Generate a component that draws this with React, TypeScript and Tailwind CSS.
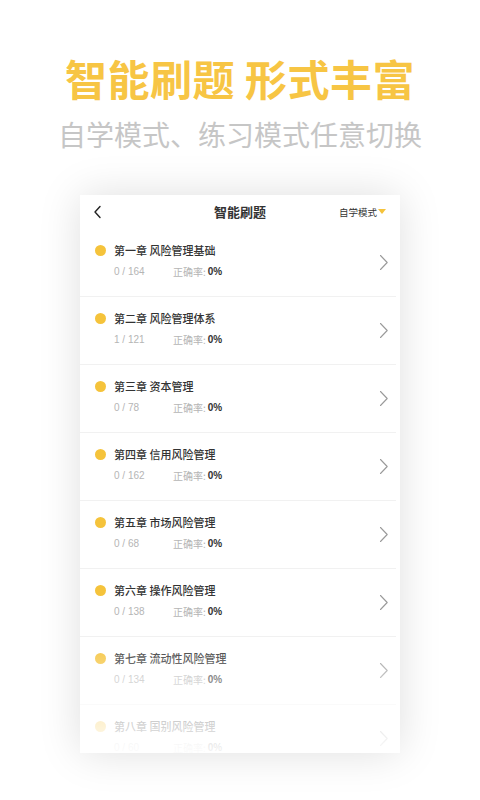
import React from "react";

const chapters = [
  { name: "第一章 风险管理基础", done: 0, total: 164 },
  { name: "第二章 风险管理体系", done: 1, total: 121 },
  { name: "第三章 资本管理", done: 0, total: 78 },
  { name: "第四章 信用风险管理", done: 0, total: 162 },
  { name: "第五章 市场风险管理", done: 0, total: 68 },
  { name: "第六章 操作风险管理", done: 0, total: 138 },
  { name: "第七章 流动性风险管理", done: 0, total: 134 },
  { name: "第八章 国别风险管理", done: 0, total: 60 },
];

function Chevron() {
  return (
    <svg width="10" height="17" viewBox="0 0 10 17" fill="none">
      <path d="M1.5 1.5 L8.2 8.5 L1.5 15.5" stroke="#9a9a9a" strokeWidth="1.1" strokeLinecap="round" strokeLinejoin="round" />
    </svg>
  );
}

export default function App() {
  return (
    <div
      className="w-[480px] h-[800px] bg-white overflow-hidden flex flex-col items-center"
      style={{ fontFamily: '"Noto Sans CJK SC", "Noto Sans", "Liberation Sans", sans-serif' }}
    >
      <div className="mt-[52px] h-[52px] flex items-center text-[42px] leading-none font-bold text-[#f7c544] tracking-[0.5px]">
        智能刷题&nbsp;形式丰富
      </div>
      <div className="mt-[12px] h-[36px] flex items-center text-[28px] leading-none font-normal text-[#c6c6c6]">
        自学模式、练习模式任意切换
      </div>

      <div className="relative mt-[43px] w-[320px] h-[558px] bg-white shadow-[0_0_40px_rgba(0,0,0,0.13)] overflow-hidden flex flex-col">
        <div className="h-[34px] shrink-0 flex items-center justify-between pl-[13px] pr-[14px] relative">
          <svg width="10" height="14" viewBox="0 0 10 14" fill="none">
            <path d="M7 1.5 L2 7 L7 12.5" stroke="#222" strokeWidth="1.4" strokeLinecap="round" strokeLinejoin="round" />
          </svg>
          <div className="absolute left-0 right-0 top-0 h-[34px] flex items-center justify-center text-[13px] font-bold text-[#333] pointer-events-none">
            智能刷题
          </div>
          <div className="flex items-center text-[9.5px] text-[#333]">
            自学模式
            <svg width="8" height="6" viewBox="0 0 8 6" className="ml-[1px]">
              <path d="M0 0 L8 0 L4 5 Z" fill="#f5c33b" />
            </svg>
          </div>
        </div>
        <div className="flex flex-col mr-[4px]">
          {chapters.map((c, i) => (
            <div key={i} className="h-[68px] shrink-0 border-b border-[#f1f1f1] flex items-center pl-[15px] pr-[7px]">
              <div className="flex-1 flex flex-col">
                <div className="flex items-center h-[18px] mt-[-5px]">
                  <div className="w-[11px] h-[11px] rounded-full bg-[#f5c33b]" />
                  <div className="ml-[8px] text-[11px] font-medium text-[#333] leading-none">{c.name}</div>
                </div>
                <div className="flex items-center h-[14px] mt-[5px] pl-[19px] text-[10px] leading-none">
                  <span className="w-[59px] text-[#b5b5b5]" style={{ fontFamily: '"Liberation Sans", "Noto Sans CJK SC", sans-serif' }}>
                    {c.done} / {c.total}
                  </span>
                  <span className="text-[#b5b5b5]">正确率:</span>
                  <span className="ml-[2px] font-bold text-[#333]" style={{ fontFamily: '"Liberation Sans", sans-serif' }}>0%</span>
                </div>
              </div>
              <Chevron />
            </div>
          ))}
        </div>
        <div className="absolute left-0 right-0 bottom-0 h-[115px] bg-gradient-to-b from-white/0 via-white/60 to-white/95 pointer-events-none" />
      </div>
    </div>
  );
}
